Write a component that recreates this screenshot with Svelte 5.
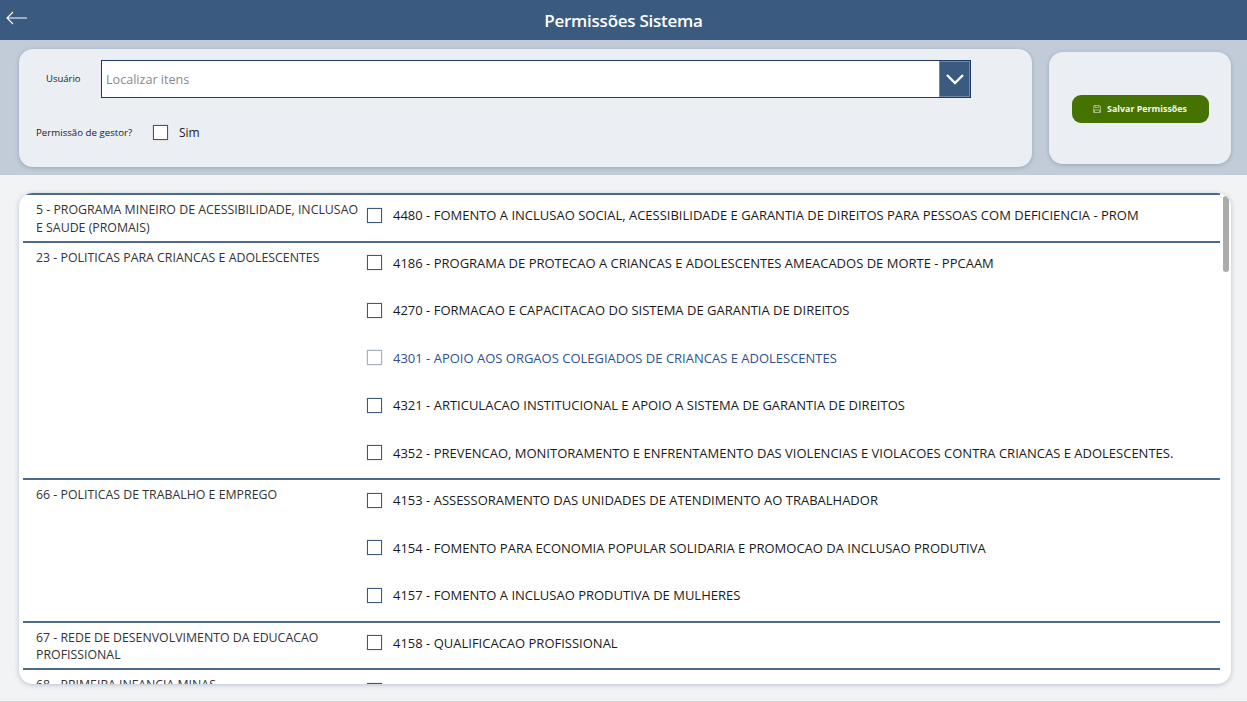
<script lang="ts">
    type Item = { label: string; hover?: boolean };
    type Group = { title: string; items: Item[] };

    const groups: Group[] = [
        {
            title: '5 - PROGRAMA MINEIRO DE ACESSIBILIDADE, INCLUSAO E SAUDE (PROMAIS)',
            items: [{ label: '4480 - FOMENTO A INCLUSAO SOCIAL, ACESSIBILIDADE E GARANTIA DE DIREITOS PARA PESSOAS COM DEFICIENCIA - PROM' }],
        },
        {
            title: '23 - POLITICAS PARA CRIANCAS E ADOLESCENTES',
            items: [
                { label: '4186 - PROGRAMA DE PROTECAO A CRIANCAS E ADOLESCENTES AMEACADOS DE MORTE - PPCAAM' },
                { label: '4270 - FORMACAO E CAPACITACAO DO SISTEMA DE GARANTIA DE DIREITOS' },
                { label: '4301 - APOIO AOS ORGAOS COLEGIADOS DE CRIANCAS E ADOLESCENTES', hover: true },
                { label: '4321 - ARTICULACAO INSTITUCIONAL E APOIO A SISTEMA DE GARANTIA DE DIREITOS' },
                { label: '4352 - PREVENCAO, MONITORAMENTO E ENFRENTAMENTO DAS VIOLENCIAS E VIOLACOES CONTRA CRIANCAS E ADOLESCENTES.' },
            ],
        },
        {
            title: '66 - POLITICAS DE TRABALHO E EMPREGO',
            items: [
                { label: '4153 - ASSESSORAMENTO DAS UNIDADES DE ATENDIMENTO AO TRABALHADOR' },
                { label: '4154 - FOMENTO PARA ECONOMIA POPULAR SOLIDARIA E PROMOCAO DA INCLUSAO PRODUTIVA' },
                { label: '4157 - FOMENTO A INCLUSAO PRODUTIVA DE MULHERES' },
            ],
        },
        {
            title: '67 - REDE DE DESENVOLVIMENTO DA EDUCACAO PROFISSIONAL',
            items: [{ label: '4158 - QUALIFICACAO PROFISSIONAL' }],
        },
        {
            title: '68 - PRIMEIRA INFANCIA MINAS',
            items: [{ label: '4159 - PRIMEIRA INFANCIA' }],
        },
    ];
</script>

<div class="page">
    <header class="topbar">
        <svg class="back" width="22" height="14" viewBox="0 0 22 14" fill="none" stroke="#fff" stroke-width="1.1">
            <path d="M21 7H1M7 1L1 7l6 6" />
        </svg>
        <h1>Permissões Sistema</h1>
    </header>

    <section class="band">
        <div class="panel filters">
            <div class="user-row">
                <span class="user-label">Usuário</span>
                <div class="combo">
                    <span class="placeholder">Localizar itens</span>
                    <span class="combo-btn">
                        <svg width="20" height="12" viewBox="0 0 20 12" fill="none" stroke="#fff" stroke-width="2.4">
                            <path d="M2 2l8 8 8-8" />
                        </svg>
                    </span>
                </div>
            </div>
            <div class="gestor-row">
                <span class="gestor-label">Permissão de gestor?</span>
                <span class="check"></span>
                <span class="sim">Sim</span>
            </div>
        </div>

        <div class="panel actions">
            <button class="save">
                <svg width="8" height="8" viewBox="0 0 8 8" fill="none" stroke="#b9cba3" stroke-width="0.8">
                    <path d="M1 .5h5.5l1 1v6h-7zM2 .5v2h4v-2M1.5 7.5V5h5v2.5" />
                </svg>
                Salvar Permissões
            </button>
        </div>
    </section>

    <main class="content">
        <div class="card">
            {#each groups as group}
                <div class="group">
                    <div class="group-title">{group.title}</div>
                    <div class="items">
                        {#each group.items as item}
                            <div class="item" class:hover={item.hover}>
                                <span class="check"></span>
                                <span>{item.label}</span>
                            </div>
                        {/each}
                    </div>
                </div>
            {/each}
            <div class="thumb"></div>
        </div>
    </main>
</div>

<style>
    :global(body) {
        margin: 0;
        background: #f1f3f5;
        font-family: "Open Sans", "Noto Sans", sans-serif;
    }
    .page {
        height: 702px;
        box-sizing: border-box;
        border-bottom: 1px solid #d4d6d9;
        overflow: hidden;
        display: flex;
        flex-direction: column;
    }
    .topbar {
        height: 40px;
        flex: none;
        background: #3a5a80;
        position: relative;
        display: flex;
        align-items: center;
        justify-content: center;
    }
    .back {
        position: absolute;
        left: 6px;
        top: 11px;
    }
    h1 {
        margin: 0;
        color: #fff;
        font-size: 17px;
        font-weight: 600;
        letter-spacing: -0.25px;
    }
    .band {
        height: 135px;
        flex: none;
        box-sizing: border-box;
        background: #c1ccd8;
        padding: 0 16px 0 19px;
        display: flex;
        align-items: center;
        gap: 17px;
    }
    .panel {
        background: #ebeef2;
        border-radius: 14px;
        box-shadow: 0 1px 4px rgba(60, 80, 110, 0.3);
    }
    .filters {
        width: 1013px;
        height: 118px;
        box-sizing: border-box;
        padding: 11px 0 0 17px;
    }
    .user-row {
        display: flex;
        align-items: center;
        height: 38px;
    }
    .user-label {
        width: 65px;
        padding-left: 10px;
        box-sizing: border-box;
        font-size: 9.5px;
        font-weight: 500;
        color: #222;
    }
    .combo {
        width: 870px;
        height: 38px;
        box-sizing: border-box;
        border: 1px solid #1f3864;
        background: #fff;
        display: flex;
        align-items: center;
        justify-content: space-between;
    }
    .placeholder {
        padding: 2px 0 0 4px;
        font-size: 12.6px;
        color: #8a8a8a;
    }
    .combo-btn {
        width: 31px;
        height: 36px;
        box-sizing: border-box;
        background: #3a5a80;
        border: 1px solid #6f88a6;
        display: flex;
        align-items: center;
        justify-content: center;
    }
    .gestor-row {
        display: flex;
        align-items: center;
        margin-top: 26px;
    }
    .gestor-label {
        width: 117px;
        font-size: 9.7px;
        color: #222;
    }
    .sim {
        margin-left: 11px;
        font-size: 12px;
        color: #222;
    }
    .check {
        width: 15px;
        height: 15px;
        flex: none;
        box-sizing: border-box;
        background: #fff;
        border: 1px solid #3a5a80;
        box-shadow: 0 0 1px rgba(60, 80, 110, 0.5);
    }
    .actions {
        width: 182px;
        height: 112px;
        display: flex;
        align-items: center;
        justify-content: center;
    }
    .save {
        width: 137px;
        height: 28px;
        margin-top: 2px;
        padding: 0;
        border: none;
        border-radius: 9px;
        background: #467300;
        color: #f2f6ec;
        font-family: inherit;
        font-size: 8.9px;
        font-weight: 700;
        display: flex;
        align-items: center;
        justify-content: center;
        gap: 6px;
    }
    .content {
        flex: 1;
        min-height: 0;
        padding: 18px 16px 17px 19px;
        display: flex;
    }
    .card {
        flex: 1;
        position: relative;
        overflow: hidden;
        background: #fff;
        border-radius: 14px;
        box-shadow: 0 1px 5px rgba(60, 80, 110, 0.3);
        padding-left: 4px;
        padding-right: 11px;
    }
    .group {
        display: flex;
        box-shadow: inset 0 2px 0 #4a6a8e;
    }
    .group-title {
        width: 344px;
        flex: none;
        box-sizing: border-box;
        padding: 8px 4px 0 13px;
        font-size: 12.35px;
        line-height: 17.5px;
        color: #333;
    }
    .items {
        flex: 1;
        min-width: 0;
    }
    .item {
        height: 47.5px;
        box-sizing: border-box;
        padding-bottom: 3px;
        display: flex;
        align-items: center;
        gap: 11px;
        font-size: 13px;
        color: #1a1a1a;
        white-space: nowrap;
    }
    .hover {
        color: #2f4f8f;
    }
    .hover .check {
        border-color: #a5b2c3;
    }
    .thumb {
        position: absolute;
        top: 3px;
        right: 2px;
        width: 6px;
        height: 76px;
        border-radius: 3px;
        background: #ababab;
    }
</style>
